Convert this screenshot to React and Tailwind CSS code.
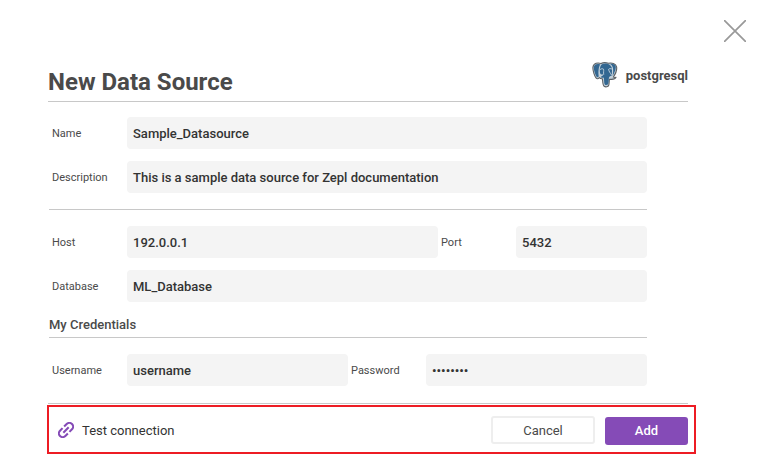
import React from "react";

function PostgresLogo() {
  return (
    <svg className="h-[26px] w-[26px]" viewBox="0 0 26 26" fill="none" strokeLinejoin="round" strokeLinecap="round">
      <path
        d="M9 1.600C6.200.4 1.400.8.9 5.400c-.2 3 1.600 8.600 3.100 10.500 1.200 1.500 2.600.8 3.500-.2.600.8 1.600 1.200 2.900 1.100.4 2.300.2 6.600 1.700 7.500 1.600 1.100 4.100.6 4.700-1.300.4-1.700.4-4.100.6-5.800 2 .3 5.800 0 6.600-1.900-1 .2-2 .2-2.600-.2 2-2.900 3.600-7.700 3.200-10.200C23.900 1.400 19.600.4 16.400 1.300 14 .5 11 .5 9 1.600Z"
        fill="#c3d0da"
        stroke="#5d6266"
        strokeWidth="1.100"
      />
      <path
        d="M8.200 2.400C5 1.500 2 2.300 1.800 5.600c0 2.800 1.600 7.500 2.800 9.200.7.900 1.500.4 2.200-.5C6.200 11.500 6.200 5.700 8.200 2.400Z"
        fill="#336791"
      />
      <path
        d="M18.100 1.900c3.800-.3 5.900 1.300 5.700 3.700-.2 2.600-1.700 6.200-3.200 8.300.5-2.800.8-5.400.4-7.900-.3-1.500-1.300-3.100-2.900-4.100Z"
        fill="#336791"
      />
      <path
        d="M10 2.300c2.200-1 5.400-.9 7.200.1 2.300 1.500 3.200 3.600 2.800 5.900-.2 2 .2 3.700-.4 5.500-1.500.2-2.600.9-2.700 2.300-.3 2.200-.1 5-.9 6.200-.6 1-2.600 1-3.200.2-1-1.600-.4-4.700-1.100-7.100-.9.700-3 .2-2.900-.4.300-.7 2.300-.8 2.900-2.900-1.200.9-3.200.4-3.600-.9-.5-3.200-.4-7 1.900-8.900Z"
        fill="#336791"
      />
      <path
        d="M8.300 7.400c1-.8 2.300-.9 3.200-.2.500 1.600-.3 3.300.2 5M20 7c-1.500-.6-2.800-.5-3.400.3.300 2.200 1.700 3.600 2.800 5.500"
        stroke="#d5dfe6"
        strokeWidth=".8"
      />
    </svg>
  );
}

function LinkIcon() {
  return (
    <svg className="mb-px h-4 w-4" viewBox="3.500 3.500 17 17" fill="none" stroke="#854bb7" strokeWidth="2.200">
      <path
        transform="rotate(-45 12 12)"
        d="M10.800 8H7a4 4 0 0 0 0 8h3.800M13.200 8H17a4 4 0 0 1 0 8h-3.800M8 12h8"
      />
    </svg>
  );
}

function Label({ children, className = "w-[75px]" }) {
  return <label className={`shrink-0 pt-0.5 text-[11px] leading-4 text-[#4a4a4a] ${className}`}>{children}</label>;
}

function Field({ children, className = "flex-1" }) {
  return (
    <div className={`flex h-8 items-center rounded-[4px] bg-[#f4f4f4] pl-1.5 pt-0.5 text-[13px] font-medium leading-4 text-[#333] ${className}`}>
      {children}
    </div>
  );
}

function Row({ children, className = "" }) {
  return <div className={`flex w-[595px] items-center ${className}`}>{children}</div>;
}

export default function App() {
  return (
    <main className="h-[464px] w-[760px] overflow-hidden bg-white font-['Roboto',sans-serif] text-[#4a4a4a]">
      <div className="flex h-[62px] justify-end pt-5 pr-[14px]">
        <svg className="h-[22px] w-[22px]" viewBox="0 0 22 22" stroke="#999" strokeWidth="1.700">
          <path d="M0 0 22 22M22 0 0 22" />
        </svg>
      </div>
      <div className="ml-12 w-[640px]">
        <header className="flex h-10 justify-between border-b border-[#c8c8c8]">
          <h1 className="pt-1 text-2xl font-bold">New Data Source</h1>
          <div className="flex h-[26px] items-center gap-2 text-[13px] font-bold">
            <PostgresLogo />
            <span className="pt-0.5">postgresql</span>
          </div>
        </header>
        <section className="pl-1 pt-[15px]">
          <Row><Label>Name</Label><Field>Sample_Datasource</Field></Row>
          <Row className="mt-3"><Label>Description</Label><Field>This is a sample data source for Zepl documentation</Field></Row>
        </section>
        <hr className="ml-px mt-4 w-[598px] border-[#c8c8c8]" />
        <section className="pl-1 pt-4">
          <Row>
            <Label>Host</Label><Field className="w-[311px]">192.0.0.1</Field>
            <Label className="ml-[3px] w-[75px]">Port</Label><Field>5432</Field>
          </Row>
          <Row className="mt-3"><Label>Database</Label><Field>ML_Database</Field></Row>
        </section>
        <h2 className="ml-px flex h-9 w-[598px] items-end border-b border-[#c8c8c8] pb-1 text-[13px] font-medium leading-4">My Credentials</h2>
        <Row className="ml-1 mt-4">
          <Label>Username</Label><Field className="w-[221px]">username</Field>
          <Label className="ml-[3px] w-[75px]">Password</Label><Field>••••••••</Field>
        </Row>
        <hr className="mt-[17px] border-[#c8c8c8]" />
      </div>
      <footer className="ml-[47px] mt-px flex h-[49px] w-[649px] items-center border-2 border-[#ed1c24] pl-[9px] pr-1.5 pt-0.5">
        <LinkIcon />
        <span className="ml-2 text-[13px] text-[#333]">Test connection</span>
        <button className="mb-px ml-auto h-7 w-[104px] rounded-[3px] border-2 border-[#eee] pt-0.5 text-[13px]">Cancel</button>
        <button className="ml-2.5 mt-px h-7 w-[83px] rounded-[3px] bg-[#854bb7] text-[13px] font-medium text-white">Add</button>
      </footer>
    </main>
  );
}
